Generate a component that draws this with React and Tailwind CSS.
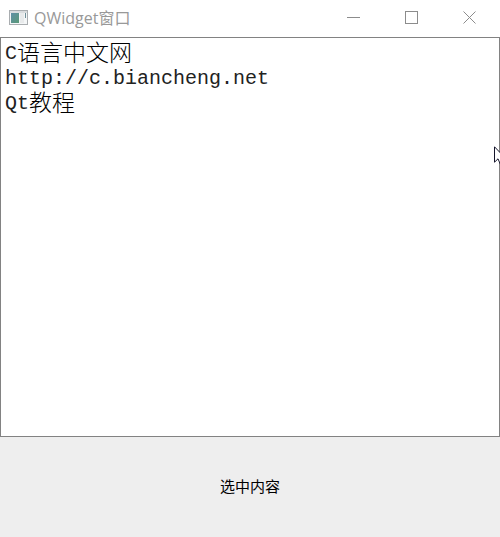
import { useState } from "react";

const items = [
  { latin: "C", chinese: "语言中文网" },
  { latin: "http://c.biancheng.net", chinese: "" },
  { latin: "Qt", chinese: "教程" },
];

function AppIcon() {
  return (
    <svg width="20" height="16" viewBox="0 0 20 16" aria-hidden="true">
      <defs>
        <linearGradient id="pane" x1="0" y1="0" x2="1" y2="1">
          <stop offset="0" stopColor="#5f8fa6" />
          <stop offset="1" stopColor="#5a9a78" />
        </linearGradient>
      </defs>
      <rect x="0.5" y="0.5" width="18" height="14" fill="#f4f6f7" stroke="#a9adb0" />
      <rect x="1" y="1" width="17" height="2" fill="#d9dcde" />
      <rect x="2" y="3" width="8" height="10" fill="url(#pane)" />
      <rect x="11" y="3" width="4" height="10" fill="#e8eaeb" />
      <rect x="16" y="3" width="1" height="5" fill="#6f8f98" />
    </svg>
  );
}

function CaptionButton({ label, children }) {
  return (
    <button type="button" aria-label={label} className="flex w-[58px] items-center justify-center hover:bg-gray-200">
      <svg width="13" height="13" viewBox="0 0 13 13" fill="none" stroke="#8c8c8c" aria-hidden="true">
        {children}
      </svg>
    </button>
  );
}

function Cursor() {
  return (
    <svg width="12" height="20" viewBox="0 0 12 20" className="pointer-events-none absolute top-[108px] -right-[7px]" aria-hidden="true">
      <path d="M0.5 0.8V16.2L4 12.8L6.6 18.8L9 17.8L6.4 12H11.3Z" fill="#fff" stroke="#14142a" />
    </svg>
  );
}

export default function App() {
  const [selected, setSelected] = useState(null);
  const current = selected === null ? "选中内容" : items[selected].latin + items[selected].chinese;

  return (
    <main className="flex h-screen flex-col overflow-hidden bg-[#eeeeee] font-['Open_Sans','Noto_Sans_CJK_SC',sans-serif]">
      <header className="flex h-[37px] shrink-0 bg-white pr-0.5 pb-0.5">
        <div className="flex flex-1 items-center gap-[5px] pl-[9px]">
          <AppIcon />
          <h1 className="text-[16px] leading-5 font-normal text-[#999999]">QWidget窗口</h1>
        </div>
        <div className="flex">
          <CaptionButton label="最小化">
            <path d="M0 6.5H13" />
          </CaptionButton>
          <CaptionButton label="最大化">
            <rect x="0.5" y="0.5" width="12" height="12" />
          </CaptionButton>
          <CaptionButton label="关闭">
            <path d="M0.5 0.5L12.5 12.5M12.5 0.5L0.5 12.5" />
          </CaptionButton>
        </div>
      </header>

      <section className="relative flex-1 border border-[#828282] bg-white pt-[3px]">
        <ul>
          {items.map((item, index) => (
            <li key={item.latin}>
              <button
                type="button"
                aria-pressed={selected === index}
                onClick={() => setSelected(index)}
                className="flex h-[25px] w-full items-start pl-1 text-left whitespace-nowrap text-black aria-pressed:bg-[#cce8ff]"
              >
                <span className="font-['Liberation_Mono',monospace] text-[20px] leading-[25px] text-[#222222]">{item.latin}</span>
                {item.chinese && (
                  <span className="font-['Noto_Sans_CJK_SC',sans-serif] text-[23px] leading-[21px] font-light">{item.chinese}</span>
                )}
              </button>
            </li>
          ))}
        </ul>
        <Cursor />
      </section>

      <output className="flex h-[100px] shrink-0 items-center justify-center font-['Liberation_Sans','Noto_Sans_CJK_SC',sans-serif] text-[15px] text-black">
        {current}
      </output>
    </main>
  );
}
